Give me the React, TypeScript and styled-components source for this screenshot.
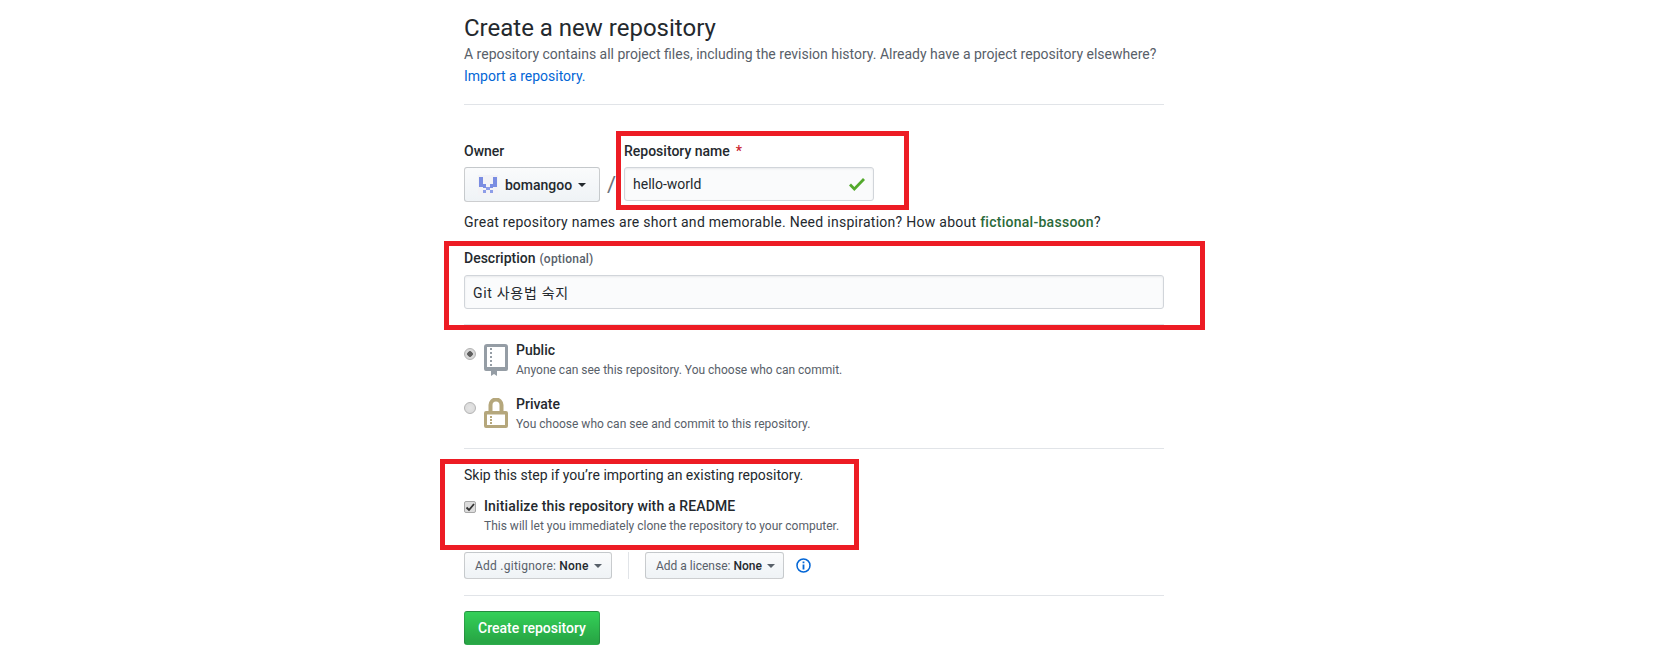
import React from "react";
import styled, { createGlobalStyle } from "styled-components";

const GlobalStyle = createGlobalStyle`
  html, body {
    margin: 0;
    padding: 0;
    background: #fff;
  }
  body {
    font-family: Roboto, "Noto Sans CJK KR", sans-serif;
    font-size: 14px;
    color: #24292e;
  }
`;

const Page = styled.div`
  position: relative;
  width: 1669px;
  height: 672px;
  overflow: hidden;
`;

const Main = styled.main`
  width: 700px;
  margin-left: 464px;
  padding-top: 12px;
`;

const Title = styled.h1`
  margin: 1px 0 -1px;
  font-size: 24px;
  font-weight: 400;
  line-height: 31px;
`;

const Lead = styled.p`
  margin: 0;
  color: #586069;
  font-size: 14px;
  line-height: 22px;
`;

const Link = styled.a`
  color: #0366d6;
`;

const Rule = styled.hr<{ $top: number; $bottom: number }>`
  border: 0;
  height: 1px;
  background: #e1e4e8;
  margin: ${(p) => p.$top}px 0 ${(p) => p.$bottom}px;
`;

const OwnerRow = styled.div`
  display: flex;
  align-items: flex-end;
`;

const Field = styled.div`
  display: flex;
  flex-direction: column;
`;

const Label = styled.label`
  font-size: 14px;
  font-weight: 500;
  line-height: 20px;
  margin-bottom: 6px;
`;

const Required = styled.span`
  color: #cb2431;
  margin-left: 6px;
`;

const OwnerButton = styled.div`
  width: 136px;
  height: 35px;
  box-sizing: border-box;
  display: flex;
  align-items: center;
  padding-left: 13px;
  gap: 7px;
  border: 1px solid rgba(27, 31, 35, 0.2);
  border-radius: 3px;
  background: linear-gradient(#fafbfc, #eff3f6);
  font-weight: 500;
  font-size: 14px;
`;

const Caret = styled.span`
  display: inline-block;
  border: 4px solid transparent;
  border-top-color: currentColor;
  border-bottom: 0;
  margin-left: 5px;
`;

const OwnerCaret = styled(Caret)`
  margin-left: -1px;
`;

const Slash = styled.span`
  width: 24px;
  font-size: 22px;
  color: #6a737d;
  line-height: 35px;
  padding-left: 7px;
  box-sizing: border-box;
`;

const InputBox = styled.div<{ $wide?: boolean }>`
  width: ${(p) => (p.$wide ? "700px" : "250px")};
  height: 34px;
  box-sizing: border-box;
  display: flex;
  align-items: center;
  justify-content: space-between;
  padding: 0 8px;
  margin-bottom: ${(p) => (p.$wide ? 0 : 1)}px;
  border: 1px solid #d1d5da;
  border-radius: 3px;
  background: #fafbfc;
  box-shadow: inset 0 1px 2px rgba(27, 31, 35, 0.075);
  font-size: 14px;
  letter-spacing: ${(p) => (p.$wide ? 0.7 : 0)}px;
`;

const Note = styled.p`
  margin: 10px 0 0;
  line-height: 21px;
  font-size: 14px;
  letter-spacing: 0.27px;
`;

const Suggestion = styled.strong`
  color: #2b6a3a;
  font-weight: 500;
`;

const DescriptionField = styled(Field)`
  margin-top: 15px;
`;

const Muted = styled.span`
  color: #586069;
  font-size: 12px;
  font-weight: 500;
  margin-left: 4px;
  letter-spacing: 0.2px;
`;

const Choice = styled.div<{ $gap: number }>`
  display: flex;
  margin-bottom: ${(p) => p.$gap}px;
`;

const Radio = styled.span<{ $on?: boolean }>`
  width: 10px;
  height: 10px;
  margin: 7px 8px 0 0;
  border-radius: 50%;
  border: 1px solid #b3b3b3;
  background: radial-gradient(circle, ${(p) => (p.$on ? "#5e5e5e 0 2.5px, #d8d8d8 3px" : "#e4e4e4 0, #d8d8d8 100%")});
  flex: none;
`;

const RepoIcon = styled.svg`
  width: 24px;
  height: 32px;
  flex: none;
  margin: 3px 8px 0 0;
`;

const ChoiceText = styled.div`
  display: flex;
  flex-direction: column;
`;

const ChoiceTitle = styled.span`
  font-weight: 500;
  font-size: 14px;
  line-height: 18px;
`;

const ReadmeTitle = styled(ChoiceTitle)`
  letter-spacing: 0.14px;
`;

const ChoiceHint = styled.span`
  color: #586069;
  font-size: 12px;
  line-height: 19px;
  margin-top: 2px;
`;

const Skip = styled.p`
  margin: -1px 0 11px;
  font-size: 14px;
  line-height: 21px;
`;

const CheckRow = styled.div`
  display: flex;
  margin-bottom: 16px;
`;

const CheckBox = styled.span`
  width: 10px;
  height: 10px;
  margin: 4px 8px 0 0;
  flex: none;
  border: 1px solid #a8a8a8;
  border-radius: 2px;
  background: #dcdcdc;
  display: flex;
  align-items: center;
  justify-content: center;
`;

const SelectRow = styled.div`
  display: flex;
  align-items: center;
  height: 27px;
`;

const SelectButton = styled.div<{ $width: number; $spacing?: number }>`
  width: ${(p) => p.$width}px;
  height: 27px;
  box-sizing: border-box;
  display: flex;
  align-items: center;
  padding-left: 10px;
  border: 1px solid rgba(27, 31, 35, 0.2);
  border-radius: 3px;
  background: linear-gradient(#fafbfc, #eff3f6);
  font-size: 12px;
  color: #586069;
  letter-spacing: ${(p) => p.$spacing ?? 0}px;
`;

const SelectValue = styled.b`
  color: #24292e;
  font-weight: 500;
  margin-left: 3px;
`;

const Divider = styled.span`
  width: 1px;
  height: 27px;
  background: #e1e4e8;
  margin: 0 16px;
`;

const InfoIcon = styled.svg`
  width: 15px;
  height: 15px;
  margin-left: 12px;
`;

const SubmitButton = styled.button`
  width: 136px;
  height: 34px;
  padding: 0;
  border: 1px solid rgba(27, 31, 35, 0.2);
  border-radius: 3px;
  background: linear-gradient(#34d058, #28a745 90%);
  color: #fff;
  font-family: inherit;
  font-weight: 500;
  font-size: 14px;
  display: block;
`;

const Highlight = styled.div<{ $x: number; $y: number; $w: number; $h: number }>`
  position: absolute;
  left: ${(p) => p.$x}px;
  top: ${(p) => p.$y}px;
  width: ${(p) => p.$w}px;
  height: ${(p) => p.$h}px;
  box-sizing: border-box;
  border: 5px solid #ed1c24;
  pointer-events: none;
`;

const Avatar = () => (
  <svg width="20" height="20" viewBox="0 0 20 20" style={{ flex: "none" }}>
    <rect width="20" height="20" fill="#f3f3f6" />
    <path d="M1 2h4v7h3v4H5v-1H1zM15 2h4v10h-4v1h-3V9h3z" fill="#7a8de2" />
    <path d="M8 12h4v3H8zM5 15h3v3H5zM12 15h3v3h-3z" fill="#8d9ee8" />
  </svg>
);

const Check = () => (
  <svg width="16" height="13" viewBox="0 3.5 12 9.5" preserveAspectRatio="none">
    <path d="M12 5l-8 8-4-4 1.5-1.5L4 10l6.5-6.5z" fill="#53a92c" />
  </svg>
);

const BookIcon = () => (
  <RepoIcon viewBox="0 0 24 32">
    <path
      fill="#959da5"
      fillRule="evenodd"
      d="M3 0h18a3 3 0 0 1 3 3v22a2 2 0 0 1-2 2H13v5l-3-2-3 2v-5H2a2 2 0 0 1-2-2V3a3 3 0 0 1 3-3zm0 3v20h18V3zm3 1h2v2H6zm0 4h2v2H6zm0 4h2v2H6zm0 4h2v2H6zm0 4h2v2H6z"
    />
  </RepoIcon>
);

const LockIcon = () => (
  <RepoIcon viewBox="0 0 24 32">
    <path
      fill="#b5a77c"
      fillRule="evenodd"
      d="M4.5 13V7a7.5 7.5 0 0 1 15 0v6H22a2 2 0 0 1 2 2v13a2 2 0 0 1-2 2H2a2 2 0 0 1-2-2V15a2 2 0 0 1 2-2zm4 0h7V7a3.5 3.5 0 0 0-7 0zM3 16.500v10.500h18V16.500zm3 1.500h2v2H6zm0 3h2v2H6zm0 3h2v2H6z"
    />
  </RepoIcon>
);

const App: React.FC = () => (
  <Page>
    <GlobalStyle />
    <Main>
      <Title>Create a new repository</Title>
      <Lead>
        A repository contains all project files, including the revision history. Already have a project repository elsewhere?
        <br />
        <Link>Import a repository.</Link>
      </Lead>
      <Rule $top={17} $bottom={36} />

      <OwnerRow>
        <Field>
          <Label>Owner</Label>
          <OwnerButton>
            <Avatar />
            bomangoo
            <OwnerCaret />
          </OwnerButton>
        </Field>
        <Slash>/</Slash>
        <Field>
          <Label>
            Repository name<Required>*</Required>
          </Label>
          <InputBox>
            hello-world
            <Check />
          </InputBox>
        </Field>
      </OwnerRow>
      <Note>
        Great repository names are short and memorable. Need inspiration? How about <Suggestion>fictional-bassoon</Suggestion>?
      </Note>

      <DescriptionField>
        <Label>
          Description<Muted>(optional)</Muted>
        </Label>
        <InputBox $wide>Git 사용법 숙지</InputBox>
      </DescriptionField>
      <Rule $top={15} $bottom={16} />

      <Choice $gap={15}>
        <Radio $on />
        <BookIcon />
        <ChoiceText>
          <ChoiceTitle>Public</ChoiceTitle>
          <ChoiceHint>Anyone can see this repository. You choose who can commit.</ChoiceHint>
        </ChoiceText>
      </Choice>
      <Choice $gap={14}>
        <Radio />
        <LockIcon />
        <ChoiceText>
          <ChoiceTitle>Private</ChoiceTitle>
          <ChoiceHint>You choose who can see and commit to this repository.</ChoiceHint>
        </ChoiceText>
      </Choice>
      <Rule $top={0} $bottom={17} />

      <Skip>Skip this step if you’re importing an existing repository.</Skip>
      <CheckRow>
        <CheckBox>
          <svg width="10" height="10" viewBox="0 0 10 10">
            <path d="M1.5 5.5l2.500 2.500 5-6" stroke="#333" strokeWidth="1.8" fill="none" />
          </svg>
        </CheckBox>
        <ChoiceText>
          <ReadmeTitle>Initialize this repository with a README</ReadmeTitle>
          <ChoiceHint>This will let you immediately clone the repository to your computer.</ChoiceHint>
        </ChoiceText>
      </CheckRow>

      <SelectRow>
        <SelectButton $width={148} $spacing={0.25}>
          Add .gitignore:<SelectValue>None</SelectValue>
          <Caret />
        </SelectButton>
        <Divider />
        <SelectButton $width={139}>
          Add a license:<SelectValue>None</SelectValue>
          <Caret />
        </SelectButton>
        <InfoIcon viewBox="0 0 15 15">
          <circle cx="7.5" cy="7.5" r="6.5" fill="none" stroke="#0366d6" strokeWidth="1.5" />
          <path d="M6.6 3.4h1.8v1.8H6.6zM6.6 6.4h1.8v5H6.6z" fill="#0366d6" />
        </InfoIcon>
      </SelectRow>
      <Rule $top={16} $bottom={15} />

      <SubmitButton>Create repository</SubmitButton>
    </Main>

    <Highlight $x={616} $y={131} $w={293} $h={79} />
    <Highlight $x={444} $y={241} $w={761} $h={89} />
    <Highlight $x={440} $y={459} $w={419} $h={91} />
  </Page>
);

export default App;
